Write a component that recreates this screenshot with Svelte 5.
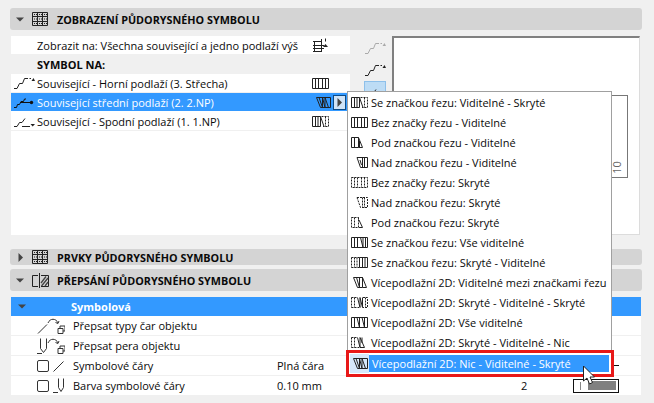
<script lang="ts">
  const menuItems = [
    { icon: 'a', label: 'Se značkou řezu: Viditelné - Skryté' },
    { icon: 'b', label: 'Bez značky řezu - Viditelné' },
    { icon: 'c', label: 'Pod značkou řezu - Viditelné' },
    { icon: 'd', label: 'Nad značkou řezu - Viditelné' },
    { icon: 'e', label: 'Bez značky řezu: Skryté' },
    { icon: 'f', label: 'Nad značkou řezu: Skryté' },
    { icon: 'g', label: 'Pod značkou řezu: Skryté' },
    { icon: 'h', label: 'Se značkou řezu: Vše viditelné' },
    { icon: 'i', label: 'Se značkou řezu: Skryté - Viditelné' },
    { icon: 'j', label: 'Vícepodlažní 2D: Viditelné mezi značkami řezu' },
    { icon: 'k', label: 'Vícepodlažní 2D: Skryté - Viditelné - Skryté' },
    { icon: 'l', label: 'Vícepodlažní 2D: Vše viditelné' },
    { icon: 'm', label: 'Vícepodlažní 2D: Skryté - Viditelné - Nic' }
  ];

  // each symbol is built from a solid and a dashed part
  const solid: Record<string, string> = {
    a: 'M.5 .5H8.5V10.5H.5ZM3.5 .5V10.5M6 .5V10.5M8.5 .5L12 10.5',
    b: 'M.5 .5H16.5V10.5H.5ZM3.5 .5V10.5M6.5 .5V10.5M10.5 .5V10.5M13.5 .5V10.5',
    c: 'M.5 .5H7.500V10.5H.5ZM3.5 .5V10.5M7.500 .5L11.5 10.5H7.500M8.500 4V10',
    d: 'M6 .5H16.5V10.5H9.500ZM13.5 .5V10.5M11.500 .5V10.5M9 3L10.500 8',
    e: '',
    f: '',
    g: 'M8 3L11.5 10.5H8',
    h: 'M.5 .5H16.5V10.5H.5ZM3.5 .5V10.5M6.5 .5V10.5M9.5 .5L12 10.5V.5M14.500 .5V10.5',
    i: 'M8.500 .5H16.5V10.5H8.500ZM11.500 .5V10.5M14 .5V10.5',
    j: 'M2.500 .5H11.500V10.5H6.500ZM5.500 .5L8.500 10.5V.5L11.5 .5L15.500 10.5H11.500',
    k: 'M6.500 .5L9 10.5V.5L11.500 10.5V.5',
    l: 'M.5 .5H16.5V10.5H.5ZM3.5 .5V10.5M6 .5L8.500 10.5V.5M11 .5L13.500 10.5V.5',
    m: 'M6.500 .5L9 10.5V.5L13.500 10.5H9M11 .5V6',
    n: 'M2.500 .5H16.5V10.5H6.500ZM5 .5L8.500 10.5V.5L11 10.5V.5L14.500 10.5'
  };
  const dashed: Record<string, string> = {
    a: 'M9.500 .5H16.5V10.5H11M13.5 .5V10.5',
    b: '',
    c: '',
    d: '',
    e: 'M.5 .5H16.5V10.5H.5ZM3.5 .5V10.5M6.5 .5V10.5M10.5 .5V10.5M13.5 .5V10.5',
    f: 'M6 .5H16.5V10.5H9.500ZM13.5 .5V10.5M11.500 .5V10.5',
    g: 'M.5 .5H7.500V10.5H.5ZM3.5 .5V10.5M7.500 .5V3',
    h: '',
    i: 'M.5 .5H8.500M.5 10.5H8.500M.5 .5V10.5M3.5 .5V10.5M6 .5V10.5',
    j: '',
    k: 'M.5 .5H6M.5 10.5H8M.5 .5V10.5M3.5 .5V10.5M12 .5H16.5V10.5H12M14.500 .5V10.5',
    l: '',
    m: 'M.5 .5H6M.5 10.5H8M.5 .5V10.5M3.5 .5V10.5',
    n: ''
  };
</script>

{#snippet symbol(id: string)}
  <svg class="sym" width="17" height="11" viewBox="0 0 17 11" fill="none" stroke="currentColor">
    {#if solid[id]}<path d={solid[id]} />{/if}
    {#if dashed[id]}<path d={dashed[id]} stroke-dasharray="2 1" />{/if}
  </svg>
{/snippet}

{#snippet stair(kind: string)}
  <svg class="stair" width="22" height="12" viewBox="0 0 22 12" fill="none" stroke="currentColor">
    {#if kind === 'up'}
      <path d="M1 11.500H4L6.500 6.500H9.500L11.500 1.500H15M16.500 1.500H18" />
      <path d="M18.500 4L20.500 1L22 4z" fill="currentColor" stroke="none" />
    {:else if kind === 'mid'}
      <path d="M1 11.500H3.500L4.500 8.500H6.500L8 5.500H10.500L11.500 3H13" />
      <path d="M8 6.500H17" />
      <circle cx="18.500" cy="6.500" r="1.700" fill="currentColor" stroke="none" />
    {:else}
      <path d="M1 11.500H4L6.500 7.500H9L12 3.500M9 11.500H17" />
      <path d="M17.500 9H22L19.700 11.500z" fill="currentColor" stroke="none" />
    {/if}
  </svg>
{/snippet}

{#snippet arrowTri(open: boolean)}
  {#if open}
    <svg class="tri" width="9" height="9" viewBox="0 0 9 9"><path d="M0 2.500h8L4 6.500z" fill="#444" /></svg>
  {:else}
    <svg class="tri" width="9" height="9" viewBox="0 0 9 9"><path d="M2.500 0l4.500 4.500L2.500 9z" fill="#444" /></svg>
  {/if}
{/snippet}

{#snippet hatch()}
  <svg class="sec-icon" width="17" height="14" viewBox="0 0 17 14" fill="none" stroke="#222">
    <path d="M.5 .5h15v13H.5zM.5 4.500h15M.5 9.500h15M5.500 .5v13M10.500 .5v13" />
    <path d="M2 2.500h3M7 2.500h3M12 2.500h3M2 7h3M7 7h3M12 7h3M2 11.500h3M7 11.500h3M12 11.500h3" stroke-dasharray="1 1" />
  </svg>
{/snippet}

<div class="page">
  <header class="section">
    {@render arrowTri(true)}
    {@render hatch()}
    <h2>ZOBRAZENÍ PŮDORYSNÉHO SYMBOLU</h2>
  </header>

  <div class="display">
    <div class="list">
      <div class="row first">
        <span class="lead"></span>
        <span class="name">Zobrazit na: Všechna související a jedno podlaží výš</span>
        <svg class="floors" width="17" height="15" viewBox="0 0 17 15" fill="none" stroke="#222">
          <path d="M1 3.500h8M1 7.500h11M1 10.500h11M1 13.500h9M2.500 3v11M9.500 1v12" />
          <path d="M11 9l2.500-3L16 9z" fill="#222" stroke="none" />
          <path d="M13.500 .5v3" />
        </svg>
      </div>
      <div class="row caption">SYMBOL NA:</div>
      <div class="row">
        <span class="lead">{@render stair('up')}</span>
        <span class="name">Související - Horní podlaží (3. Střecha)</span>
        {@render symbol('b')}
      </div>
      <div class="row active">
        <span class="lead">{@render stair('mid')}</span>
        <span class="name">Související střední podlaží (2. 2.NP)</span>
        <span class="active-sym">{@render symbol('n')}</span>
        <span class="more">{@render arrowTri(false)}</span>
      </div>
      <div class="row">
        <span class="lead">{@render stair('down')}</span>
        <span class="name">Související - Spodní podlaží (1. 1.NP)</span>
        {@render symbol('a')}
      </div>
    </div>

    <div class="strip">
      <span class="tool off">{@render stair('up')}</span>
      <span class="tool">{@render stair('up')}</span>
      <span class="tool on">{@render stair('down')}</span>
    </div>

    <div class="preview">
      <div class="sheet">
        <span class="scale">10</span>
      </div>
    </div>
  </div>

  <header class="section closed">
    {@render arrowTri(false)}
    {@render hatch()}
    <h2>PRVKY PŮDORYSNÉHO SYMBOLU</h2>
  </header>

  <header class="section override">
    {@render arrowTri(true)}
    <svg class="sec-icon" width="17" height="15" viewBox="0 0 17 15" fill="none" stroke="#222">
      <path d="M6 2.500H.5v11H6M9 2.500h7.500v11H9M7.500 0v15" />
      <path d="M9 10l5-6.500M9.500 13L16 5M13 13l3-4" stroke-width="1.300" stroke="#444" />
    </svg>
    <h2>PŘEPSÁNÍ PŮDORYSNÉHO SYMBOLU</h2>
  </header>

  <div class="table">
    <div class="group">
      {@render arrowTri(true)}
      <span>Symbolová</span>
    </div>
    <div class="prop">
      <span class="prop-icon">
        <svg width="28" height="16" viewBox="0 0 28 16" fill="none" stroke="#333">
          <path d="M1 15.500L10 6.500" />
          <path d="M11 5c2-5 8-5 10 0M21 5.500l-2.500-1M21 5.500l1-2.500" />
          <path d="M21 10.500h5v5h-5zM23 10.500V8h5v5h-2" />
        </svg>
      </span>
      <span class="prop-name">Přepsat typy čar objektu</span>
    </div>
    <div class="prop">
      <span class="prop-icon">
        <svg width="28" height="16" viewBox="0 0 28 16" fill="none" stroke="#333">
          <path d="M3.500 .5v10l3 4 3-4V.5M0 15.500h5" />
          <path d="M11 5c2-5 8-5 10 0M21 5.500l-2.500-1M21 5.500l1-2.500" />
          <path d="M21 10.500h5v5h-5zM23 10.500V8h5v5h-2" />
        </svg>
      </span>
      <span class="prop-name">Přepsat pera objektu</span>
    </div>
    <div class="prop">
      <span class="prop-icon">
        <span class="check"></span>
        <svg width="11" height="12" viewBox="0 0 11 12" fill="none" stroke="#333"><path d="M.5 11.500L10.500 1.500" /></svg>
      </span>
      <span class="prop-name">Symbolové čáry</span>
      <span class="prop-value">Plná čára</span>
      <span class="line-sample"></span>
    </div>
    <div class="prop">
      <span class="prop-icon">
        <span class="check"></span>
        <svg width="12" height="16" viewBox="0 0 12 16" fill="none" stroke="#333">
          <path d="M5.500 .5v9l2.500 4 2.500-4V.5M0 14.500h5" />
        </svg>
      </span>
      <span class="prop-name">Barva symbolové čáry</span>
      <span class="prop-value">0.10 mm</span>
      <span class="pen-num">2</span>
      <span class="pen-swatch"><i></i><b></b></span>
    </div>
  </div>

  <div class="menu">
    {#each menuItems as item}
      <div class="menu-item">
        <span class="menu-icon">{@render symbol(item.icon)}</span>
        <span>{item.label}</span>
      </div>
    {/each}
    <div class="menu-item picked">
      <span class="menu-icon chosen">{@render symbol('n')}</span>
      <span>Vícepodlažní 2D: Nic - Viditelné - Skryté</span>
    </div>
  </div>

  <svg class="cursor" width="14" height="21" viewBox="0 0 14 21">
    <path d="M1.500 1v15l3.500-3 2.500 6 3-1.500-2.500-5.500h4.500z" fill="#fff" stroke="#222" />
  </svg>
</div>

<style>
  :global(body) {
    margin: 0;
    background: #f0f0f0;
  }

  .page {
    position: relative;
    width: 654px;
    height: 403px;
    box-sizing: border-box;
    padding: 8px 12px 0 10px;
    overflow: hidden;
    background: #f0f0f0;
    color: #0a0a0a;
    font-family: "Open Sans", "Noto Sans", sans-serif;
    font-size: 11px;
  }

  .section {
    display: flex;
    align-items: center;
    height: 22px;
    padding-left: 6px;
    background: #d4d4d4;
    border-radius: 3px;
  }

  .section.closed {
    height: 16px;
    margin-top: 14px;
  }

  .section.override {
    margin-top: 4px;
  }

  .tri {
    flex: none;
  }

  .sec-icon {
    margin: 0 8px 0 7px;
    flex: none;
  }

  h2 {
    margin: 0;
    font-size: 10.800px;
    font-weight: 700;
    color: #0a0a0a;
  }

  .display {
    display: flex;
    height: 199px;
    margin-top: 6px;
    padding-left: 1px;
  }

  .list {
    width: 339px;
    background: #fff;
    flex: none;
  }

  .row {
    display: flex;
    align-items: center;
    height: 18px;
    margin-bottom: 1px;
    white-space: nowrap;
    box-shadow: 0 1px 0 #f0f0f0;
  }

  .row.first {
    margin-bottom: 0;
    box-shadow: none;
  }

  .row.caption {
    height: 20px;
    margin-bottom: 0;
    padding-left: 26px;
    background: #f0f0f0;
    font-weight: 700;
    box-shadow: none;
  }

  .row.active {
    color: #fff;
    background: #3399ff;
    box-shadow: none;
  }

  .lead {
    display: flex;
    width: 26px;
    padding-left: 2px;
    box-sizing: border-box;
    flex: none;
    color: #222;
  }

  .active .lead {
    color: #111;
  }

  .name {
    width: 275px;
    flex: none;
    overflow: hidden;
  }

  .sym {
    flex: none;
    color: #222;
  }

  .active-sym {
    display: flex;
    margin-left: 2px;
  }

  .more {
    display: flex;
    align-items: center;
    justify-content: center;
    width: 13px;
    height: 15px;
    margin-left: 2px;
    box-sizing: border-box;
    background: #cfe3f7;
    border: 1px solid #0b4a86;
    flex: none;
  }

  .more .tri {
    margin-left: -1px;
  }

  .strip {
    display: flex;
    flex-direction: column;
    gap: 1px;
    width: 22px;
    margin: 1px 0 0 14px;
    flex: none;
  }

  .tool {
    display: flex;
    align-items: center;
    justify-content: center;
    height: 21px;
    color: #222;
  }

  .tool.off {
    color: #aaa;
  }

  .tool.on {
    height: 22px;
    background: #bddcf5;
    box-shadow: inset 0 0 0 1px #8ec0ea;
  }

  .preview {
    position: relative;
    width: 248px;
    margin-left: 6px;
    box-sizing: border-box;
    background: #fff;
    border: 1px solid #dcdcdc;
    border-top: 2px solid #808080;
    border-left: 2px solid #808080;
  }

  .sheet {
    position: absolute;
    top: 57px;
    left: 0;
    right: 11px;
    height: 81px;
    border: 1px solid #777;
  }

  .scale {
    position: absolute;
    right: 4px;
    bottom: 4px;
    font-size: 11px;
    line-height: 11px;
    color: #666;
    transform: rotate(-90deg);
  }

  .table {
    width: 630px;
    margin-top: 6px;
    padding-left: 1px;
  }

  .group {
    display: flex;
    align-items: center;
    height: 19px;
    padding-left: 7px;
    background: #3399ff;
    color: #fff;
    font-weight: 700;
  }

  .group span {
    margin-left: 44px;
  }

  .prop {
    display: flex;
    align-items: center;
    height: 19px;
    margin-bottom: 1px;
    background: #fff;
    white-space: nowrap;
  }

  .prop-icon {
    display: flex;
    align-items: center;
    gap: 3px;
    width: 62px;
    padding-left: 26px;
    box-sizing: border-box;
    flex: none;
  }

  .prop-name {
    width: 204px;
    flex: none;
  }

  .prop-value {
    width: 244px;
    flex: none;
  }

  .line-sample {
    width: 5px;
    height: 1px;
    margin-left: 93px;
    background: #111;
  }

  .pen-num {
    width: 52px;
    flex: none;
  }

  .pen-swatch {
    display: flex;
    align-items: center;
    gap: 7px;
    width: 46px;
    height: 14px;
    padding-left: 6px;
    box-sizing: border-box;
    background: #fff;
    border: 1px solid #111;
    flex: none;
  }

  .pen-swatch i {
    width: 1px;
    height: 8px;
    background: #888;
  }

  .pen-swatch b {
    width: 28px;
    height: 9px;
    background: #808080;
  }

  .check {
    width: 12px;
    height: 12px;
    margin-right: 1px;
    box-sizing: border-box;
    background: #fff;
    border: 1px solid #333;
    border-radius: 2px;
    flex: none;
  }

  .menu {
    position: absolute;
    top: 91px;
    left: 347px;
    width: 265px;
    box-sizing: border-box;
    background: #fff;
    border: 1px solid #a0a0a0;
    border-bottom: none;
    white-space: nowrap;
  }

  .menu-item {
    display: flex;
    align-items: center;
    height: 20px;
  }

  .menu-icon {
    display: flex;
    width: 23px;
    padding-left: 3px;
    box-sizing: border-box;
    flex: none;
  }

  .menu-item.picked {
    height: 23px;
    margin-right: -1px;
    background: #3399ff;
    color: #fff;
    outline: 3px solid #e81818;
    outline-offset: -1px;
    box-shadow: inset 0 0 0 3px #fff;
  }

  .menu-icon.chosen {
    align-self: stretch;
    align-items: center;
    width: 19px;
    margin: 2px 3px 2px 2px;
    padding-left: 1px;
    background: #d6e8fb;
  }

  .cursor {
    position: absolute;
    left: 582px;
    top: 365px;
  }
</style>
